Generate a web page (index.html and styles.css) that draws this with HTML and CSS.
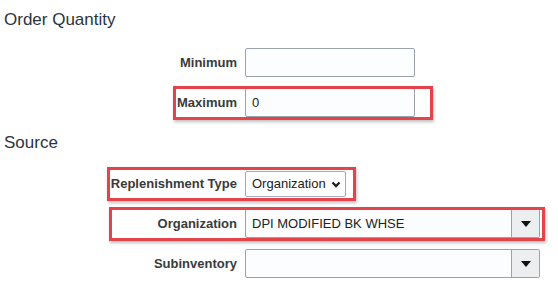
FILE: index.html
```html
<!DOCTYPE html>
<html lang="en">
<head>
	<meta charset="UTF-8">
	<title>Replenishment</title>
	<link rel="stylesheet" href="styles.css">
</head>
<body>
	<div class="page">
		<h2 class="section-title">Order Quantity</h2>
		<div class="form">
			<div class="row">
				<span class="label">Minimum</span>
				<div class="field field-short"></div>
			</div>
			<div class="row">
				<span class="label">Maximum</span>
				<div class="field field-short">0</div>
				<span class="mark mark-max"></span>
			</div>
		</div>

		<h2 class="section-title section-source">Source</h2>
		<div class="form">
			<div class="row row-select">
				<span class="label">Replenishment Type</span>
				<div class="select">
					Organization
					<svg class="chevron" width="10" height="7" viewBox="0 0 10 7"><polyline points="1.5,1.5 5,5 8.5,1.5" fill="none" stroke="#222" stroke-width="2.4"/></svg>
				</div>
				<span class="mark mark-type"></span>
			</div>
			<div class="row">
				<span class="label">Organization</span>
				<div class="combo">
					<div class="combo-text">DPI MODIFIED BK WHSE</div>
					<div class="combo-btn"><svg width="10" height="6" viewBox="0 0 10 6"><polygon points="0,0 10,0 5,6" fill="#111"/></svg></div>
				</div>
				<span class="mark mark-org"></span>
			</div>
			<div class="row">
				<span class="label">Subinventory</span>
				<div class="combo">
					<div class="combo-text"></div>
					<div class="combo-btn"><svg width="10" height="6" viewBox="0 0 10 6"><polygon points="0,0 10,0 5,6" fill="#111"/></svg></div>
				</div>
			</div>
		</div>
	</div>
</body>
</html>
```

FILE: styles.css
```css
body{margin:0;padding:0;background:#fff;font:13px/1.2 "Liberation Sans",Arial,sans-serif;color:#333;}
.page{padding:0 4px;}
.section-title{margin:10px 0 0;font-size:17px;line-height:20px;font-weight:normal;color:#2c3340;}
.section-source{margin-top:16px;}
.form{margin-top:18px;}
.row{position:relative;display:flex;align-items:center;height:29px;margin-bottom:11px;}
.row:last-child{margin-bottom:0;}
.row-select{height:26px;margin-bottom:12px;}
.label{width:233px;margin-right:8px;text-align:right;font-weight:bold;color:#3a3a3a;}
.field{box-sizing:border-box;height:29px;border:1px solid #9aa3ad;border-radius:2px;background:#fbfdff;padding:0 6px;line-height:27px;color:#222;}
.field-short{width:170px;}
.select{box-sizing:border-box;width:101px;height:26px;display:flex;align-items:center;gap:5px;border:1px solid #a3abb4;border-radius:2px;background:#fff;padding:0 0 0 6px;color:#222;}
.chevron{display:block;margin-top:1px;}
.combo{box-sizing:border-box;width:295px;height:29px;display:flex;border:1px solid #9aa3ad;border-radius:2px;background:#fbfdff;}
.combo-text{flex:1;padding:0 6px;line-height:27px;color:#222;}
.combo-btn{width:27px;display:flex;align-items:center;justify-content:center;border-left:1px solid #9aa3ad;background:#eceef0;}
.mark{position:absolute;box-sizing:border-box;height:34px;border:3px solid #e5434b;box-shadow:1px 2px 3px rgba(0,0,0,.25);pointer-events:none;}
.mark-max{left:169px;top:-2px;width:260px;}
.mark-type{left:103px;top:-4px;width:249px;}
.mark-org{left:105px;top:-2px;width:436px;}
```
